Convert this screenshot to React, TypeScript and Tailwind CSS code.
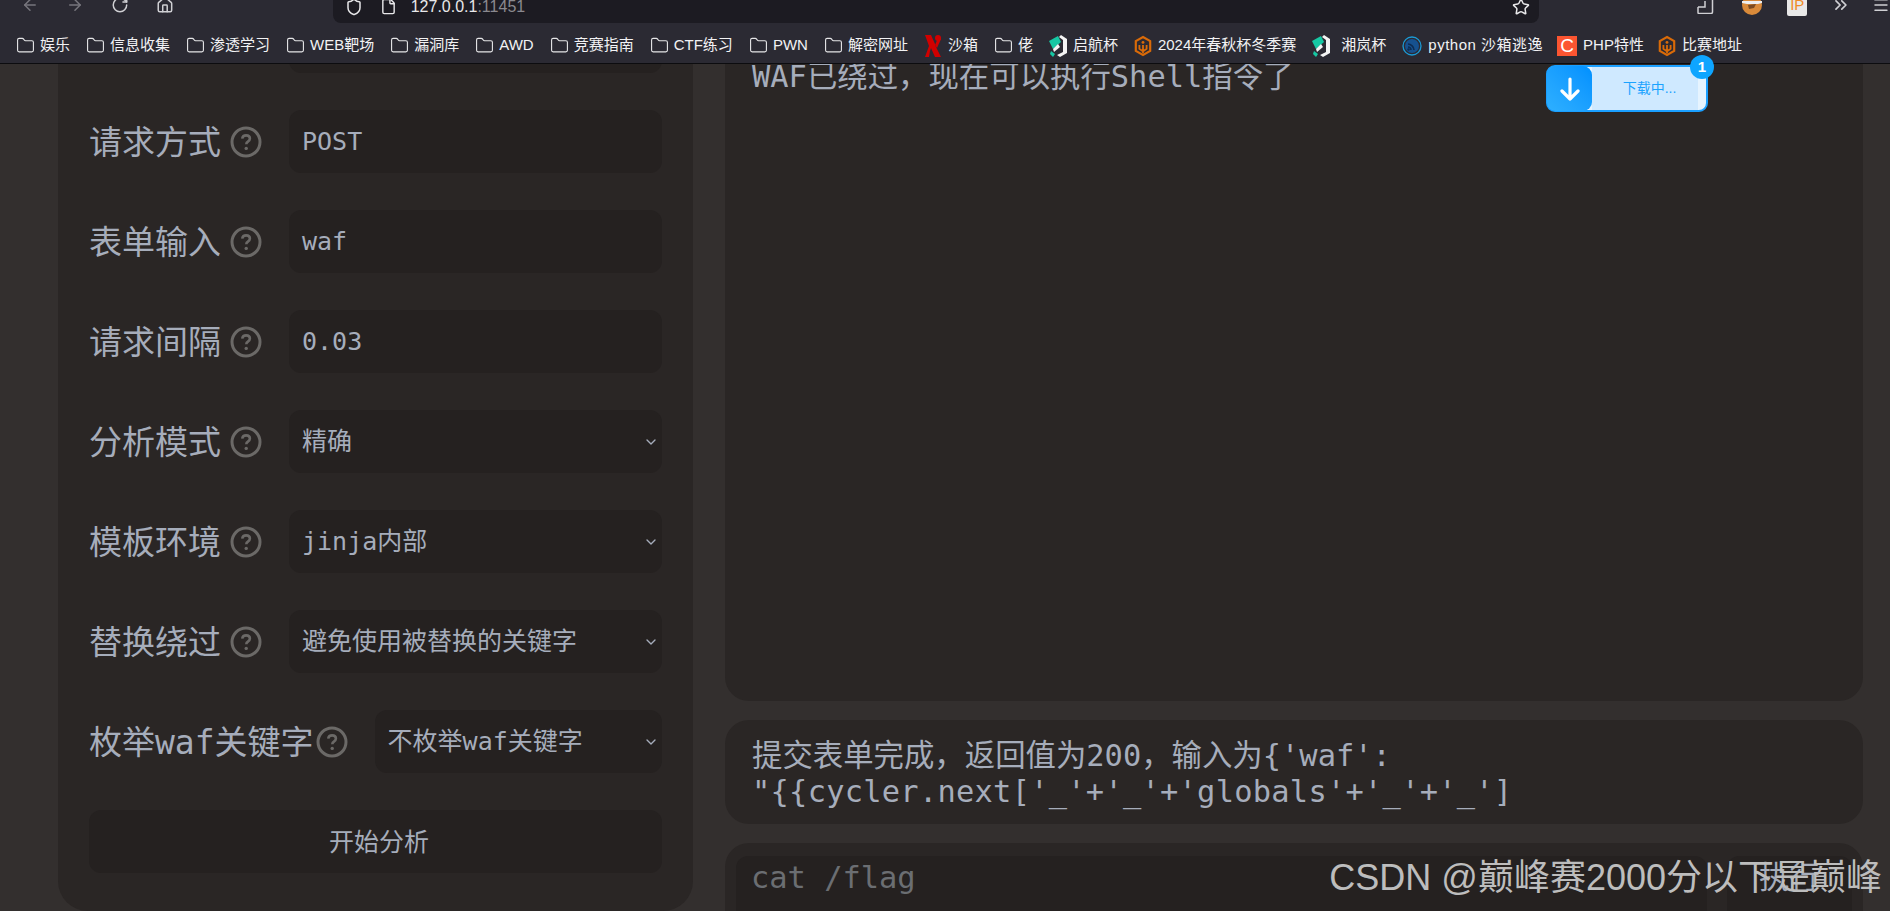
import React from "react";
import { ArrowLeft, ArrowRight, RotateCw, Home, Shield, File, Star, ChevronsRight, Menu, Folder, ChevronDown } from "lucide-react";

const mono = "font-['DejaVu_Sans_Mono','Noto_Sans_CJK_SC',monospace]";

const HelpIcon: React.FC<{ className?: string }> = ({ className }) => (
  <svg viewBox="0 0 32 32" className={`w-[32px] h-[32px] shrink-0 ${className ?? ""}`} fill="none">
    <circle cx="16" cy="16" r="14" stroke="#6b6967" strokeWidth="3" />
    <path d="M12.2 12.6c.3-2 1.8-3.2 3.9-3.2 2.2 0 3.8 1.3 3.8 3.2 0 1.5-.8 2.3-2 3.1-1.1.7-1.6 1.3-1.6 2.5" stroke="#6b6967" strokeWidth="2.6" />
    <circle cx="16.2" cy="22.4" r="1.7" fill="#6b6967" />
  </svg>
);

// logos on the bookmark bar
const XLogo = () => (
  <svg viewBox="0 0 18 24" className="w-[18px] h-[24px]">
    <path d="M1 1h6l4 9 1 3 5 10h-6l-4-9-1 3-1 6H1l4-11z" fill="#d10000" />
    <path d="M11 11l3-7 3 1-4 9z" fill="#d10000" />
    <circle cx="14" cy="4" r="3" fill="#d10000" />
  </svg>
);

const SailLogo = () => (
  <svg viewBox="0 0 20 24" className="w-[20px] h-[24px]">
    <path d="M13 1l6 4v14l-7 4-3-2 6-3V6l-4-3z" fill="#f4f4f4" />
    <path d="M1 7l9-5 3 6-8 7z" fill="#16c7a3" />
    <path d="M3 17l4 3-2 3-3-3z" fill="#16c7a3" />
    <path d="M5 15l5-5 2 3-6 5z" fill="#f4f4f4" />
  </svg>
);

const HexLogo = () => (
  <svg viewBox="0 0 20 24" className="w-[18px] h-[22px]" fill="none">
    <path d="M10 2l8 4.5v11L10 22l-8-4.5v-11z" stroke="#d96a08" strokeWidth="2.4" />
    <circle cx="10" cy="8" r="1.6" fill="#d96a08" />
    <path d="M10 11v9M6 11v4l4 3 4-3v-4" stroke="#d96a08" strokeWidth="2" />
  </svg>
);

const PythonLogo = () => (
  <svg viewBox="0 0 20 20" className="w-[20px] h-[20px]" fill="none">
    <circle cx="10" cy="10" r="9" stroke="#1b9ad6" strokeWidth="1.3" />
    <circle cx="10" cy="10" r="7" fill="#16518f" />
    <path d="M6 8c3 0 6 3 6 6M6 11c1.600 0 3 1.400 3 3" stroke="#0d2c52" strokeWidth="1.600" />
    <circle cx="6.500" cy="13.500" r="1.200" fill="#0d2c52" />
  </svg>
);

const CLogo = () => (
  <div className="w-[20px] h-[20px] bg-[#fc5531] flex items-center justify-center text-white text-[19px] leading-none font-['Liberation_Sans',sans-serif]">
    C
  </div>
);

const ExtensionIcon = () => (
  <svg viewBox="0 0 18 18" className="w-[18px] h-[18px]" fill="none" stroke="currentColor" strokeWidth="1.5">
    <path d="M1 11h7V5M1 11v5.500q0 1 1 1h12q1.500 0 1.500-1.500V0" />
  </svg>
);

const Avatar = () => (
  <svg viewBox="0 0 20 20" className="w-[20px] h-[20px]">
    <circle cx="10" cy="10" r="10" fill="#d98a3a" />
    <path d="M0 6h20v2l-4 1H5L0 8z" fill="#eeeeee" />
    <path d="M6 10l8-1-2 4-5 1z" fill="#7a4a22" />
  </svg>
);

const DownloadArrow = () => (
  <svg viewBox="0 0 20 24" className="w-[20px] h-[24px]" fill="none" stroke="white" strokeWidth="3.2" strokeLinecap="round" strokeLinejoin="round">
    <path d="M10 2v20M2 14l8 8 8-8" />
  </svg>
);

const FolderIcon = () => <Folder size={19} strokeWidth={1.4} className="text-[#e6e6e8] shrink-0" />;

type Mark = { label: string; icon: React.ReactNode; gap: string; ml: string; text?: string };

const bookmarks: Mark[] = [
  { label: "娱乐", icon: <FolderIcon />, gap: "gap-[5px]", ml: "ml-[16px]" },
  { label: "信息收集", icon: <FolderIcon />, gap: "gap-[5px]", ml: "ml-[16px]" },
  { label: "渗透学习", icon: <FolderIcon />, gap: "gap-[5px]", ml: "ml-[16px]" },
  { label: "WEB靶场", icon: <FolderIcon />, gap: "gap-[5px]", ml: "ml-[16px]" },
  { label: "漏洞库", icon: <FolderIcon />, gap: "gap-[5px]", ml: "ml-[16px]" },
  { label: "AWD", icon: <FolderIcon />, gap: "gap-[5px]", ml: "ml-[16px]" },
  { label: "竞赛指南", icon: <FolderIcon />, gap: "gap-[5px]", ml: "ml-[16px]" },
  { label: "CTF练习", icon: <FolderIcon />, gap: "gap-[5px]", ml: "ml-[16px]" },
  { label: "PWN", icon: <FolderIcon />, gap: "gap-[5px]", ml: "ml-[16px]" },
  { label: "解密网址", icon: <FolderIcon />, gap: "gap-[5px]", ml: "ml-[16px]" },
  { label: "沙箱", icon: <XLogo />, gap: "gap-[6px]", ml: "ml-[16px]" },
  { label: "佬", icon: <FolderIcon />, gap: "gap-[5px]", ml: "ml-[16px]" },
  { label: "启航杯", icon: <SailLogo />, gap: "gap-[5px]", ml: "ml-[15px]" },
  { label: "2024年春秋杯冬季赛", icon: <HexLogo />, gap: "gap-[6px]", ml: "ml-[16px]" },
  { label: "湘岚杯", icon: <SailLogo />, gap: "gap-[10px]", ml: "ml-[15px]" },
  { label: "python 沙箱逃逸", icon: <PythonLogo />, gap: "gap-[6px]", ml: "ml-[16px]", text: "tracking-[0.5px]" },
  { label: "PHP特性", icon: <CLogo />, gap: "gap-[6px]", ml: "ml-[14px]" },
  { label: "比赛地址", icon: <HexLogo />, gap: "gap-[6px]", ml: "ml-[14px]" },
];

const Toolbar = () => (
  <div className="h-[24px] overflow-hidden">
    <div className="-mt-[10px] h-[30px] flex items-center text-[#d0d0d4]">
      <ArrowLeft size={18} className="ml-[21px] text-[#77767d]" />
      <ArrowRight size={18} className="ml-[27px] text-[#77767d]" />
      <RotateCw size={18} className="ml-[27px]" />
      <Home size={18} className="ml-[27px]" />
      <div className="ml-[159px] w-[1212px] h-[33px] self-start bg-[#1c1b22] rounded-[8px] flex items-center text-[#e8e8ea]">
        <Shield size={18} className="ml-[12px]" />
        <File size={17} className="ml-[17px]" />
        <span className="ml-[14px] text-[16px] font-['Liberation_Sans',sans-serif]">
          127.0.0.1<span className="text-[#8a898f]">:11451</span>
        </span>
        <Star size={18} className="ml-auto mr-[9px]" />
      </div>
      <div className="ml-[158px]"><ExtensionIcon /></div>
      <div className="ml-[27px]"><Avatar /></div>
      <div className="ml-[25px] w-[20px] h-[22px] rounded-[2px] bg-[#e8e8e8] text-[#f08a24] text-[15px] leading-[22px] text-center font-['Liberation_Sans',sans-serif]">
        IP
      </div>
      <ChevronsRight size={20} className="ml-[24px]" />
      <Menu size={18} className="ml-[21px]" />
    </div>
  </div>
);

const BookmarkBar = () => (
  <div className="h-[39px] flex items-center pt-[4px] text-[15px] text-[#f2f2f4] whitespace-nowrap font-['Liberation_Sans','Noto_Sans_CJK_SC',sans-serif]">
    {bookmarks.map((b, i) => (
      <div key={i} className={`flex items-center ${b.gap} ${b.ml}`}>
        {b.icon}
        <span className={b.text}>{b.label}</span>
      </div>
    ))}
  </div>
);

type RowProps = { label: string; value: string; select?: boolean; iconGap?: string };

const Row: React.FC<RowProps> = ({ label, value, select, iconGap = "ml-[9px]" }) => (
  <div className="flex items-center">
    <span className="text-[33px] leading-none whitespace-nowrap pt-[2px]">{label}</span>
    <HelpIcon className={iconGap} />
    <div className="ml-[27px] flex-1 h-[63px] bg-[#252120] rounded-[12px] flex items-center pl-[13px] pr-[3px] text-[25px]">
      <span className="whitespace-nowrap">{value}</span>
      {select && <ChevronDown size={16} strokeWidth={2} className="ml-auto text-[#a6adbb]" />}
    </div>
  </div>
);

const App: React.FC = () => {
  return (
    <div className={`relative w-[1890px] h-[911px] overflow-hidden bg-[#332f2e] text-[#a6adbb] ${mono}`}>
      <header className="h-[64px] bg-[#2b2a33] border-b border-[#0c0c0f]">
        <Toolbar />
        <BookmarkBar />
      </header>

      <main className="h-[847px] overflow-hidden flex items-start pl-[58px] pr-[27px] gap-[32px]">
        <section className="w-[635px] h-[847px] shrink-0 bg-[#2a2625] rounded-b-[30px] overflow-hidden px-[31px] flex flex-col gap-[37px]">
          <div className="-mt-[54px] ml-[200px] h-[63px] bg-[#252120] rounded-[12px] shrink-0" />
          <Row label="请求方式" value="POST" />
          <Row label="表单输入" value="waf" />
          <Row label="请求间隔" value="0.03" />
          <Row label="分析模式" value="精确" select />
          <Row label="模板环境" value="jinja内部" select />
          <Row label="替换绕过" value="避免使用被替换的关键字" select />
          <Row label="枚举waf关键字" value="不枚举waf关键字" select iconGap="ml-[2px]" />
          <button className="h-[63px] bg-[#252120] rounded-[12px] text-[25px] shrink-0 pl-[7px] pt-[3px]">开始分析</button>
        </section>

        <section className="flex-1 flex flex-col gap-[19px] text-[30.4px] leading-[36px]">
          <div className="h-[637px] bg-[#2a2625] rounded-b-[24px] px-[27px] overflow-hidden">
            <div className="-mt-[5px] whitespace-nowrap">{"WAF已绕过\uFF0C现在可以执行Shell指令了"}</div>
          </div>
          <div className="h-[104px] bg-[#2a2625] rounded-[24px] px-[27px] pt-[18px]">
            {"提交表单完成\uFF0C返回值为200\uFF0C输入为{'waf':"}
            <br />
            <span className="tracking-[0.25px]">{"\"{{cycler.next['_'+'_'+'globals'+'_'+'_']"}</span>
          </div>
          <div className="h-[90px] bg-[#2a2625] rounded-[24px] px-[11px] pt-[13px] flex gap-[20px]">
            <div className="w-[971px] h-[64px] bg-[#252120] rounded-[12px] pl-[15px] pt-[4px] text-[#6b6e72]">cat /flag</div>
            <div className="flex-1 h-[64px] bg-[#252120] rounded-[12px] text-center pt-[4px]">执行</div>
          </div>
        </section>
      </main>

      {/* download widget floating over the page */}
      <div className="absolute left-[1546px] top-[65px] w-[162px] h-[47px] rounded-[9px] border-2 border-[#1a9fff] bg-[#e6f4ff] flex font-['Liberation_Sans','Noto_Sans_CJK_SC',sans-serif]">
        <div className="w-[45px] -ml-[1px] -my-[1px] rounded-[9px] bg-gradient-to-tr from-[#2eb0ff] to-[#0090ff] flex items-center justify-center">
          <DownloadArrow />
        </div>
        <div className="w-[106px] bg-[#cfe9ff] text-[#1aa3ff] text-[14px] flex items-center justify-center pl-[9px]">下载中...</div>
      </div>
      <div className="absolute left-[1690px] top-[55px] w-[24px] h-[24px] rounded-full bg-[#0ea5ff] text-white text-[15px] font-bold flex items-center justify-center font-['Liberation_Sans',sans-serif]">
        1
      </div>

      {/* csdn watermark */}
      <div className="absolute right-[8px] top-[857px] text-[36px] leading-[42px] text-[#bdbdbd] whitespace-nowrap font-['Liberation_Sans','Noto_Sans_CJK_SC',sans-serif]">
        CSDN @巅峰赛2000分以下是巅峰
      </div>
    </div>
  );
};

export default App;
